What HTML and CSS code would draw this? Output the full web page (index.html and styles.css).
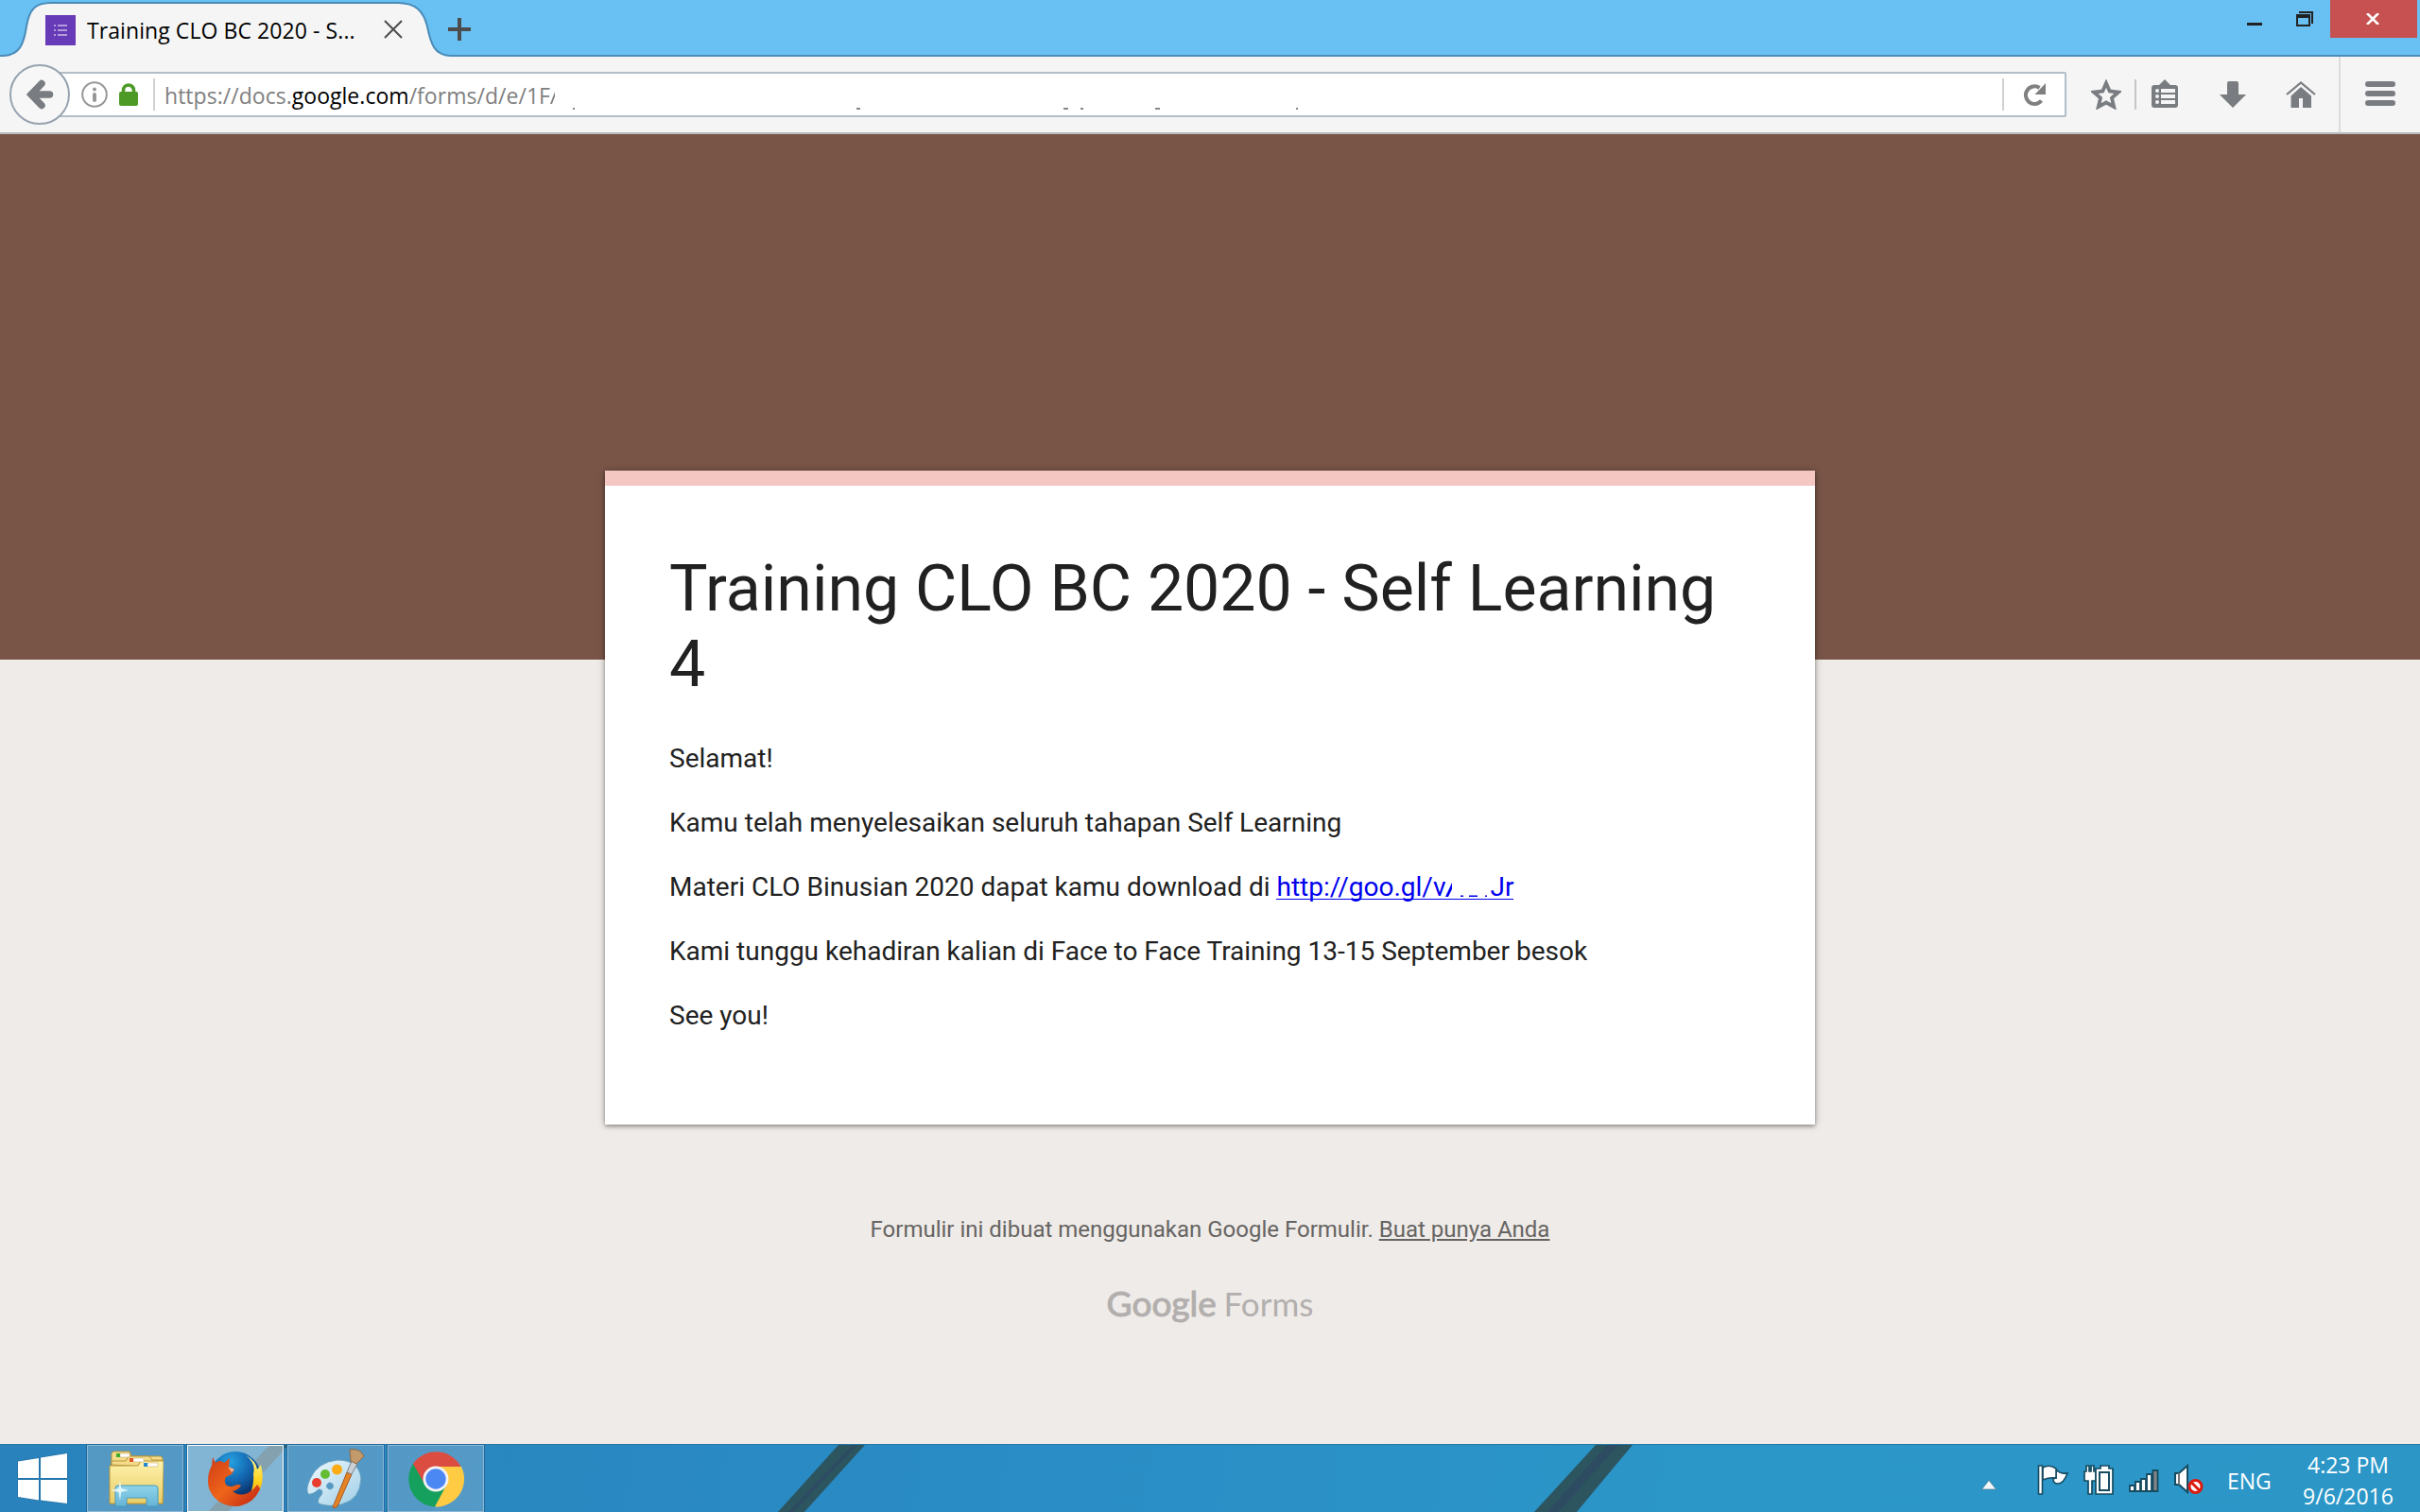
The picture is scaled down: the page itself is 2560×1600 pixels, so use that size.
FILE: index.html
```html
<!DOCTYPE html>
<html lang="id">
<head>
<meta charset="utf-8">
<title>Training CLO BC 2020 - Self Learning 4</title>
<link rel="stylesheet" href="styles.css">
</head>
<body>
<div class="window">
  <header class="titlebar">
    <svg class="tab-shape" width="480" height="60" viewBox="0 0 480 60">
      <path d="M0 60V59H4C20 58 25 48 28 28C31 10 37 4 54 4H421C440 4 448 12 452 28C456 48 460 58 476 59V60Z" fill="#f5f5f5"/>
      <path d="M0 59H4C20 58 25 48 28 28C31 10 37 3 54 3H421C440 3 448 12 452 28C456 48 460 58 476 59H480" fill="none" stroke="#4a8bb8" stroke-width="2"/>
    </svg>
    <div class="tab">
      <svg class="favicon" width="32" height="32" viewBox="0 0 32 32"><path fill="#673ab7" d="M0 0h32v32H0z"/><path d="M9 11h2M9 16h2M9 21h2M13 11h10M13 16h10M13 21h10" stroke="#fff" stroke-width="1.2"/></svg>
      <span class="tab-title">Training CLO BC 2020 - S...</span>
      <svg class="tab-close" width="20" height="20" viewBox="0 0 20 20"><path d="M1 1 19 19M19 1 1 19" stroke="#4c4c4c" stroke-width="2"/></svg>
    </div>
    <svg class="new-tab" width="24" height="24" viewBox="0 0 24 24"><path d="M12 0v24M0 12h24" stroke="#4c4c4c" stroke-width="4"/></svg>
    <div class="controls">
      <svg width="16" height="16" viewBox="0 0 16 16"><path d="M0 12h16v3H0z" fill="#222"/></svg>
      <svg class="restore" width="18" height="16" viewBox="0 0 18 16"><path fill="#222" fill-rule="evenodd" d="M3 0H18V13H16V2H3ZM0 3H15V16H0ZM2 7V14H13V7Z"/></svg>
      <div class="close"><svg width="14" height="12" viewBox="0 0 14 12"><path d="M1 0 13 12M13 0 1 12" stroke="#fff" stroke-width="2.6"/></svg></div>
    </div>
  </header>

  <nav class="toolbar">
    <svg class="back" width="64" height="64" viewBox="0 0 64 64"><circle cx="32" cy="32" r="31" fill="#f7f7f7" stroke="#97a3b0" stroke-width="2"/><path d="M34 20.500 23 32 34 43.500M24 32H42.500" fill="none" stroke="#797c80" stroke-width="7.500" stroke-linecap="round" stroke-linejoin="miter"/></svg>
    <div class="urlbar">
      <svg class="info" width="28" height="28" viewBox="0 0 28 28"><circle cx="14" cy="14" r="12.800" fill="none" stroke="#979797" stroke-width="2"/><circle cx="14" cy="8.500" r="2" fill="#979797"/><path d="M14 14v6" stroke="#979797" stroke-width="4" stroke-linecap="round"/></svg>
      <svg class="lock" width="20" height="24" viewBox="0 0 20 24"><rect y="9" width="20" height="15" rx="2" fill="#4d9a26"/><path d="M4.500 11V7.500a5.500 5.500 0 0 1 11 0V11" fill="none" stroke="#4d9a26" stroke-width="3.600"/></svg>
      <i class="rule"></i>
      <span class="url">https://docs.<b>google.com</b>/forms/d/e/1F</span>
      <svg class="cut" width="6" height="18" viewBox="0 0 6 18"><path d="M0 17 5 4V9L2 17Z" fill="#808080"/></svg>
      <svg class="remnants" width="780" height="4" viewBox="600 114 780 4"><path d="M606 114h2v2h-2zM906 114h4v2h-4zM1125 114h5v2h-5zM1143 114h3v2h-3zM1222 114h5v2h-5zM1371 114h2v2h-2z" fill="#888"/></svg>
      <i class="rule rule-end"></i>
      <svg class="reload" width="24" height="24" viewBox="0 0 24 24"><path d="M18.500 18.500A9.300 9.300 0 1 1 16.500 5" fill="none" stroke="#808080" stroke-width="4"/><path d="M23 0v12H11.500Z" fill="#808080"/></svg>
    </div>
    <svg class="star" width="32" height="32" viewBox="0 0 32 32"><path d="M16 4 19.700 12.500 29 13.500 22 19.700 24.200 29 16 24.500 7.800 29 10 19.700 3 13.500 12.300 12.500Z" fill="none" stroke="#797c80" stroke-width="3.800"/></svg>
    <i class="tool-rule"></i>
    <svg class="clip" width="28" height="30" viewBox="0 0 28 30"><path fill="#797c80" fill-rule="evenodd" d="M3 6H8L14 0 20 6H25Q28 6 28 9V27Q28 30 25 30H3Q0 30 0 27V9Q0 6 3 6ZM10 10V14H25V10ZM10 16V20H25V16ZM10 22V26H25V22Z"/><g fill="#f5f5f5"><circle cx="6" cy="12" r="2"/><circle cx="6" cy="18" r="2"/><circle cx="6" cy="24" r="2"/></g></svg>
    <svg class="down" width="28" height="28" viewBox="0 0 28 28"><path d="M10 0H18Q20 0 20 2V14H28L14 28 0 14H8V2Q8 0 10 0Z" fill="#797c80"/></svg>
    <svg class="home" width="32" height="28" viewBox="0 0 32 28"><path d="M1 14 16 1.500 31 14" fill="none" stroke="#797c80" stroke-width="2.200"/><path d="M16 6 27 15.500V28H18V18H14V28H5.500V15.500Z" fill="#797c80"/></svg>
    <i class="menu-rule"></i>
    <svg class="menu" width="32" height="26" viewBox="0 0 32 26"><path d="M3 3h26M3 13h26M3 23h26" stroke="#797c80" stroke-width="6" stroke-linecap="round"/></svg>
  </nav>

  <main class="page">
    <section class="card">
      <h1>Training CLO BC 2020 - Self Learning 4</h1>
      <p>Selamat!</p>
      <p>Kamu telah menyelesaikan seluruh tahapan Self Learning</p>
      <p>Materi CLO Binusian 2020 dapat kamu download di <a class="link" href="#">http://goo.gl/v<svg width="47" height="24" viewBox="0 0 47 24"><path d="M0 22 7 7V14L3 22ZM16 20.500h3V22h-3zM25 20.500h9V22H25zM42 20.500h2V22h-2z" fill="#00e"/></svg><span>Jr</span></a></p>
      <p>Kami tunggu kehadiran kalian di Face to Face Training 13-15 September besok</p>
      <p>See you!</p>
    </section>
    <footer class="credit">Formulir ini dibuat menggunakan Google Formulir. <u>Buat punya Anda</u></footer>
    <div class="brand"><span class="brand-google">Google</span><span class="brand-forms">Forms</span></div>
  </main>

  <footer class="taskbar">
    <svg class="streaks" width="2560" height="72" viewBox="0 0 2560 72"><path d="M285 0h20L240 72H219ZM887 0h28L850 72H822ZM1688 0h39L1667 72H1622Z" fill="#2c5560"/><path d="M902 0h5L838 72h-5ZM1700 0h12L1648 72h-12Z" fill="#2d4c62"/></svg>
    <svg class="start" width="54" height="56" viewBox="0 0 54 56"><path d="M1 9.500 23 6V27H1ZM25 5.500 53 1V27H25ZM1 29H23V50.500L1 47ZM25 29H53V54L25 50.500Z" fill="#fff" stroke="#1e689b" stroke-width="1" paint-order="stroke"/></svg>
    <div class="tasks">
      <div class="task">
        <svg width="60" height="60" viewBox="0 0 60 60"><defs><linearGradient id="fold" x2="0" y2="1"><stop stop-color="#fff2ac"/><stop offset="1" stop-color="#e8cd67"/></linearGradient><linearGradient id="glass" x2="0" y2="1"><stop stop-color="#8fd4ea"/><stop offset="1" stop-color="#65b4d5"/></linearGradient></defs>
        <g stroke="#b99637" fill="#f4dc8b"><path d="M5 56V3l2-2h17l2 5h31l2 2v48Z"/><path d="M5 15V11h15l3-5h22l3 4h11v8Z"/><path d="M3 16h30l3-5h24v8l-1 37H3Z" fill="url(#fold)"/></g><path d="M14 3h10v4H14ZM28 8h11v4H28ZM43 13h11v4H43Z" fill="#fff" stroke="#c1a35b" stroke-width=".5"/><path d="M10 3h4v4h-4z" fill="#3cae2c"/><path d="M24 8h4v4h-4z" fill="#e25728"/><path d="M39 13h4v4h-4z" fill="#2488d3"/><path d="M9 59V40q0-3 3-3H51q3 0 3 3V59H42V50H21V59Z" fill="url(#glass)" stroke="#4699bd"/><path d="M14 31l1.200 9L23 42l-7.800 2L14 53l-1.500-9L4 42l8.500-2Z" fill="#effcff" opacity=".85"/></svg>
      </div>
      <div class="task active">
        <svg width="60" height="60" viewBox="0 0 60 60"><defs><radialGradient id="globe" cx=".4" cy=".2" r=".8"><stop stop-color="#25a2e2"/><stop offset=".5" stop-color="#1265ae"/><stop offset="1" stop-color="#081e53"/></radialGradient><linearGradient id="fox" x2="1" y2="1"><stop stop-color="#cf3b16"/><stop offset=".5" stop-color="#ee6519"/><stop offset="1" stop-color="#bf2114"/></linearGradient><linearGradient id="flame" x2="0" y2="1"><stop stop-color="#fff7a0"/><stop offset=".5" stop-color="#ffd21b"/><stop offset="1" stop-color="#ee7a17"/></linearGradient></defs>
        <circle cx="30" cy="28" r="27" fill="url(#globe)"/><path d="M41 5Q52 11 53 20L57 15Q61 31 56 41 48 57 31 59 42 50 46 45 50 34 49 25 52 13 41 5Z" fill="url(#flame)"/><path d="M6 7 9 13Q14 9 18 13L24 8 23 17 29 20 26 25 20 28Q17 33 21 37 26 39 29 37 34 35 36 37 33 42 27 43 34 49 43 45 50 41 53 36 56 39 56 41 48 58 30 59 9 58 2 40-1 27 5 16Z" fill="url(#fox)"/><path d="M22 17 29 20 26 23Z" fill="#f7b293"/></svg>
      </div>
      <div class="task">
        <svg width="64" height="64" viewBox="0 0 64 64"><defs><linearGradient id="pal" x2="1" y2="1"><stop stop-color="#f0faff"/><stop offset="1" stop-color="#9fcee6"/></linearGradient></defs><path fill-rule="evenodd" d="M34 12Q57 12 59 32 58 54 38 59 24 62 14 58 12 54 17 49 20 43 14 43 8 49 3 48 0 43 5 32 13 14 34 12ZM26 36a3.500 3.500 0 1 0 .1 0Z" fill="url(#pal)" stroke="#679fbf"/><circle cx="12" cy="36" r="5" fill="#e83c2e"/><circle cx="21" cy="27" r="5" fill="#63bd35"/><circle cx="33.500" cy="22" r="5.500" fill="#fdac18"/><path d="M44 25 49 27 34 61Q31 64 29 62Z" fill="#e58425" stroke="#a7551c"/><path d="M49 13 55 16 49 27 44 25Z" fill="#cbd0d5" stroke="#788087"/><path d="M47 1Q58-1 62 8L54 16 48 13Z" fill="#c39a6c" stroke="#8d6a45"/></svg>
      </div>
      <div class="task">
        <svg width="60" height="60" viewBox="0 0 60 60"><path d="M30 30V17H57A29.500 29.500 0 0 1 29 59.500Z" fill="#ffcb42"/><path d="M30 30 41 37 29 59.500A29.500 29.500 0 0 1 6 14Z" fill="#16a05d"/><path d="M6 14A29.500 29.500 0 0 1 56.500 17H30L18 35Z" fill="#dc4d41"/><circle cx="30" cy="30" r="13.500" fill="#f3f3f3"/><circle cx="30" cy="30" r="10.700" fill="#4c88f4"/></svg>
      </div>
    </div>
    <div class="tray">
      <svg class="caret" width="16" height="11" viewBox="0 0 16 11"><path d="M8 .5 15.500 10H.5Z" fill="#f2f7fa" stroke="#51788c" stroke-width=".7"/></svg>
      <svg class="flag" width="34" height="34" viewBox="0 0 34 34"><g fill="#fff" stroke="#164b61" stroke-width="1.600"><path d="M20 6Q24 11 32 10 28 21 22 21 17 21 17 16L20 15Z"/><path d="M6 4Q13 0 20 5V15Q13 14 6 17Z"/><path d="M1.500 2H5.500V32H1.500Z"/></g></svg>
      <svg class="battery" width="34" height="34" viewBox="0 0 34 34"><g fill="#fff" stroke="#164b61" stroke-width="1.700"><path d="M4 2H7V8H9V2H12V8H14V18H10V32H6V18H2V8H4Z"/><path d="M19 2H28V5H32V32H14V5H19Z"/></g><path d="M18 9H28V28H18Z" fill="none" stroke="#164b61" stroke-width="2"/></svg>
      <svg class="signal" width="34" height="26" viewBox="0 0 34 26"><g fill="#fff" stroke="#164b61" stroke-width="1.800"><path d="M2 18H7V24H2ZM8 14H13V24H8ZM14 11H19V24H14ZM20 6H25V24H20Z"/><path d="M26.500 2H31.500V24H26.500Z" fill="#858585"/></g></svg>
      <svg class="sound" width="34" height="34" viewBox="0 0 34 34"><path d="M2 10H6L15 2V30L6 22H2Z" fill="#fff" stroke="#164b61" stroke-width="2"/><path d="M6 10V22" stroke="#777" stroke-width="2"/><circle cx="23.500" cy="24" r="6.500" fill="#fff" stroke="#dc1c10" stroke-width="3"/><path d="M19 19.500 28 28.500" stroke="#dc1c10" stroke-width="3"/></svg>
      <span class="lang">ENG</span>
      <div class="clock"><span class="time">4:23 PM</span><span class="date">9/6/2016</span></div>
    </div>
  </footer>
</div>
</body>
</html>
```

FILE: styles.css
```css
* { box-sizing: border-box; }
body { margin: 0; }
svg { display: block; flex: none; }
.window { width: 2560px; height: 1600px; display: flex; flex-direction: column; overflow: hidden; font-family: "Open Sans", sans-serif; }

.titlebar { position: relative; height: 60px; flex: none; display: flex; background: #69c0f2; border-bottom: 2px solid #4a8bb8; }
.tab-shape { position: absolute; left: 0; top: 0; }
.tab { position: relative; width: 474px; padding: 16px 0 0 48px; display: flex; align-items: flex-start; }
.tab-title { width: 314px; margin-left: 12px; font-size: 23px; letter-spacing: 0.08px; line-height: 33px; white-space: nowrap; color: #000; }
.tab-close { margin-top: 5px; }
.new-tab { margin-top: 19px; }
.controls { margin-left: auto; display: flex; align-items: flex-start; padding-right: 3px; }
.controls > svg { margin-top: 12px; }
.controls .restore { margin: 12px 18px 0 36px; }
.close { width: 92px; height: 40px; padding-right: 2px; background: #c75050; display: flex; align-items: center; justify-content: center; }

.toolbar { height: 82px; flex: none; display: flex; align-items: center; background: #f5f5f5; border-bottom: 2px solid #b9bbbb; padding-left: 10px; }
.back { position: relative; z-index: 1; }
.urlbar { position: relative; width: 2126px; height: 48px; margin-left: -14px; padding-left: 24px; display: flex; align-items: center; background: #fff; border: 2px solid #b3bec7; border-radius: 2px; }
.lock { margin-left: 12px; }
.rule { width: 2px; height: 34px; margin-left: 16px; background: #d0d0d0; }
.url { margin-left: 10px; padding-top: 2px; font-size: 23px; letter-spacing: 0.03px; line-height: 32px; color: #808080; white-space: nowrap; }
.url b { font-weight: 400; color: #000; }
.cut { margin-top: 3px; }
.remnants { position: absolute; left: 538px; top: 36px; }
.rule-end { margin-left: auto; }
.reload { margin: 0 19px 0 21px; }
.star { margin-left: 26px; }
.tool-rule { width: 2px; height: 32px; margin-left: 14px; background: #c6c6c6; }
.clip { margin-left: 16px; margin-top: -2px; }
.down { margin-left: 44px; }
.home { margin-left: 42px; }
.menu-rule { width: 2px; height: 80px; margin-left: 24px; background: #dcdcdc; }
.menu { margin-left: 26px; margin-top: -2px; }

.page { height: 1386px; flex: none; display: flex; flex-direction: column; align-items: center; padding-top: 356px; font-family: Roboto, sans-serif; background: linear-gradient(#795548 556px, #efebe8 556px); }
.card { width: 1280px; height: 692px; padding: 69px 68px; background: #fff; border-top: 16px solid #f4c7c3; box-shadow: 0 2px 4px rgba(0,0,0,.3), 0 0 8px rgba(0,0,0,.25); color: #212121; }
h1 { margin: 0 0 26px; font-size: 68px; line-height: 80px; font-weight: 400; }
p { margin: 0; font-size: 28px; line-height: 68px; display: flex; align-items: center; white-space: pre; }
.link { display: flex; align-items: center; color: #00e; text-decoration: none; background: linear-gradient(#00e,#00e) 0 46px / 100% 1px no-repeat; }
.credit { margin-top: 94px; font-size: 24px; line-height: 34px; color: #666462; white-space: nowrap; }
.brand { display: flex; gap: 6px; margin-top: 39px; line-height: 44px; color: #b2afae; }
.brand-google { width: 118px; font: 400 37px/44px "Lato", sans-serif; -webkit-text-stroke: 1px #b2afae; }
.brand-forms { font: 400 35px/44px "Lato", sans-serif; }

.taskbar { position: relative; height: 72px; flex: none; display: flex; background: linear-gradient(100deg, #2982bb, #2a8cc5 40%, #2b96c8 70%, #2c97c7); border-top: 1px solid #2678a5; color: #fff; }
.streaks { position: absolute; left: 0; top: 0; }
.start { position: relative; margin: 8px 20px 0 18px; }
.tasks { position: relative; display: flex; gap: 4px; }
.task { width: 102px; height: 71px; display: flex; align-items: center; justify-content: center; background: rgba(137,178,207,.45); border: 1px solid #8cb9d7; outline: 1px solid #23699b; }
.active { background: rgba(190,211,226,.6); border: 1px solid #fff; }
.tray { margin-left: auto; display: flex; align-items: center; font-size: 23px; }
.caret { margin: 14px 43px 0 0; }
.flag, .battery, .signal { margin-right: 14px; }
.flag, .battery, .sound { margin-top: 2px; }
.signal { margin-top: 4px; }
.sound { margin-right: 23px; }
.lang { width: 81px; line-height: 32px; margin-top: 5px; }
.clock { width: 94px; margin: 5px 29px 0 0; display: flex; flex-direction: column; align-items: center; line-height: 33px; white-space: nowrap; }
```
